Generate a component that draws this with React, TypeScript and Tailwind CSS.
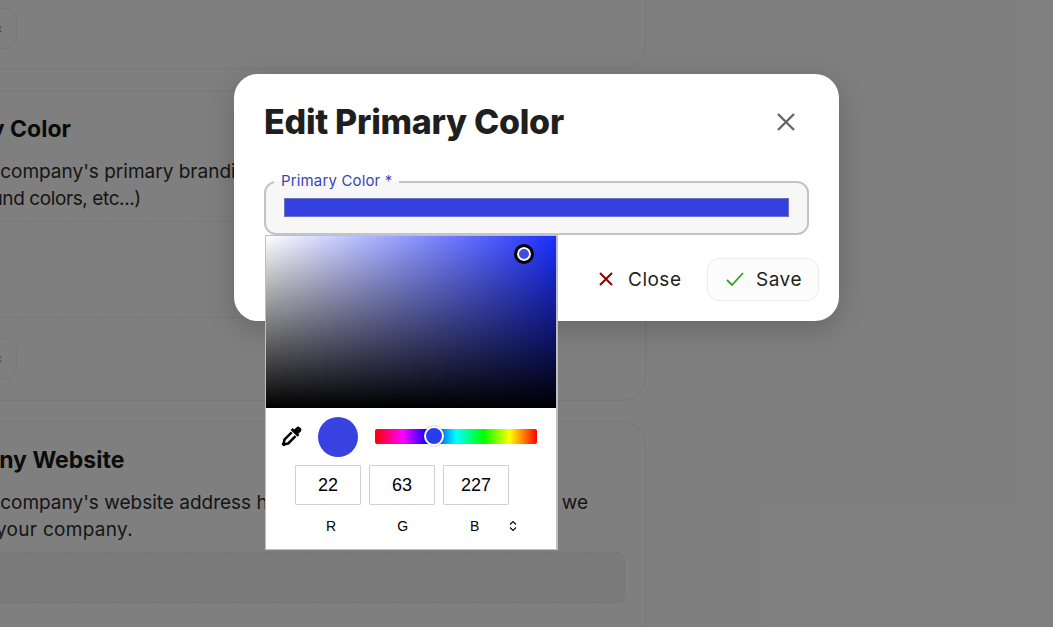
import React from "react";

const font = { fontFamily: "Inter, 'Liberation Sans', sans-serif" };

function SmallButton() {
  return (
    <div className="w-[48px] h-[41px] ml-[-31px] rounded-[12px] border border-[#eeeeee] flex items-center justify-end pr-[14px] text-[#888888] text-xs">
      ‹
    </div>
  );
}

function Background() {
  return (
    <div className="w-[646px] text-[#161616]" style={font}>
      <div className="h-[69px] ml-[-40px] rounded-br-[24px] border-r border-b border-[#eeeeee] pt-[8px] pl-[40px]">
        <SmallButton />
      </div>

      <div className="mt-[22px] h-[310px] ml-[-40px] rounded-[24px] border border-[#eeeeee] pl-[39px] pr-[20px]">
        <div className="pt-[22px] text-[23px] leading-[30px] font-bold whitespace-nowrap ml-[-84px]">Primary Color</div>
        <div className="mt-[14px] text-[19px] leading-[27px] text-[#2c2c2c] whitespace-nowrap">
          <div className="ml-[-87px]">Add your company's primary branding color here</div>
          <div className="ml-[-160px] tracking-[-0.4px]">(buttons, background colors, etc...)</div>
        </div>
        <div className="mt-[9px] h-[97px] ml-[-39px] rounded-[8px] border border-dashed border-[#e8e8e8]" />
        <div className="mt-[20px]">
          <SmallButton />
        </div>
      </div>

      <div className="mt-[20px] h-[260px] ml-[-40px] rounded-t-[24px] border border-b-0 border-[#eeeeee] pl-[39px] pr-[20px]">
        <div className="pt-[23px] text-[23px] leading-[30px] font-bold whitespace-nowrap ml-[-81px]">Company Website</div>
        <div className="mt-[14px] text-[19px] leading-[27px] text-[#2c2c2c] whitespace-nowrap">
          <div className="flex justify-between w-[675px] ml-[-87px]">
            <span>Add your company's website address here so that</span>
            <span>we</span>
          </div>
          <div className="ml-[-4px] tracking-[0.3px]">your company.</div>
        </div>
        <div className="mt-[9px] h-[51px] rounded-[8px] border border-dashed border-[#e8e8e8] bg-[#f5f5f5] ml-[-39px]" />
      </div>
    </div>
  );
}

function Eyedropper() {
  return (
    <svg width="22" height="22" viewBox="0 0 22 22" className="shrink-0 mb-[2px]">
      <path d="M13.2 4.6 15.6 2.2a2.2 2.2 0 0 1 3.1 0l1.1 1.1a2.2 2.2 0 0 1 0 3.1l-2.4 2.4 1 1-1.9 1.9-6.8-6.8 1.9-1.9z" fill="#000" />
      <path d="M10.7 7.4 3.4 14.7 2.9 17.4l-.9 1.6.9.9 1.6-.9 2.7-.5 7.3-7.3" fill="none" stroke="#000" strokeWidth="2.5" strokeLinejoin="round" />
    </svg>
  );
}

function Picker() {
  const arial = { fontFamily: "'Liberation Sans', Arial, sans-serif" };
  return (
    <div className="absolute left-[265px] top-[235px] w-[293px] h-[315px] bg-white border border-[#bfbfbf] border-r-2 text-black" style={arial}>
      <div className="relative h-[172px] bg-[linear-gradient(to_bottom,rgba(0,0,0,0),#000),linear-gradient(to_right,#fff,#1c2eff)]">
        <div className="absolute left-[248px] top-[8px] w-[20px] h-[20px] rounded-full border-[3px] border-black bg-[#3f4ce0] shadow-[inset_0_0_0_2px_#fff]" />
      </div>
      <div className="flex items-center h-[57px] pl-[15px] pt-[1px]">
        <Eyedropper />
        <div className="ml-[15px] w-[40px] h-[40px] rounded-full bg-[#3742e0]" />
        <div className="relative ml-[17px] mb-[2px] w-[162px] h-[15px] rounded-[2px] bg-[linear-gradient(to_right,#f00,#f0f_17%,#00f_33%,#0ff_50%,#0f0_67%,#ff0_83%,#f00)]">
          <div className="absolute left-[49px] top-[-2.5px] w-[20px] h-[20px] rounded-full border-[2px] border-white bg-[#2a3cf0] shadow-[0_0_2px_rgba(0,0,0,0.4)]" />
        </div>
      </div>
      <div className="flex gap-[8px] pl-[29px]">
        {["22", "63", "227"].map((v) => (
          <div key={v} className="w-[66px] h-[40px] border border-[#d0d0d0] rounded-[1px] flex items-center justify-center text-[18px]">
            {v}
          </div>
        ))}
      </div>
      <div className="flex items-center mt-[12px] h-[18px] text-[14px]">
        <span className="ml-[60px]">R</span>
        <span className="ml-[61px]">G</span>
        <span className="ml-[62px]">B</span>
        <svg width="10" height="12" viewBox="0 0 10 12" className="ml-[29px]" fill="none" stroke="#000" strokeWidth="1.1">
          <path d="M2 4.5 5 1.5l3 3M2 7.5l3 3 3-3" />
        </svg>
      </div>
    </div>
  );
}

function Modal() {
  return (
    <div className="absolute left-[234px] top-[74px] w-[605px] h-[247px] bg-white rounded-[24px] text-[#1f1f1f] shadow-[0_8px_30px_rgba(0,0,0,0.2)]" style={font}>
      <div className="flex items-center justify-between pl-[30px] pr-[41px] pt-[25px] h-[71px]">
        <h1 className="text-[34px] leading-[44px] font-extrabold tracking-[-0.27px] whitespace-nowrap">Edit Primary Color</h1>
        <svg width="24" height="24" viewBox="0 0 24 24" fill="none" stroke="#666666" strokeWidth="2.4">
          <path d="M4 4l16 16M20 4 4 20" />
        </svg>
      </div>

      <fieldset className="mt-[29px] mx-[30px] h-[61px] rounded-[12px] border-2 border-[#c4c4c4] bg-[#f7f7f7] px-[18px]">
        <legend className="ml-[-10px] px-[7px] text-[15px] leading-[16px] text-[#3a46b8] tracking-[0.15px] -translate-y-px">Primary Color *</legend>
        <div className="h-[19px] mt-[8px] bg-[#3540e0] border border-[#6a72c0]" />
      </fieldset>

      <div className="flex justify-end items-center mt-[23px] pr-[20px] gap-[9px] text-[19px] tracking-[0.5px]">
        <div className="flex items-center h-[43px] w-[112px] pl-[11px] gap-[13px]">
          <svg width="18" height="18" viewBox="0 0 18 18" fill="none" stroke="#8b0000" strokeWidth="2" className="mb-[2px]">
            <path d="M3 3l12 12M15 3 3 15" />
          </svg>
          <span className="mt-[2px]">Close</span>
        </div>
        <div className="flex items-center h-[43px] w-[112px] pl-[17px] gap-[11px] rounded-[12px] border border-[#ececec] bg-[#fcfcfc]">
          <svg width="20" height="18" viewBox="0 0 20 18" fill="none" stroke="#37a01e" strokeWidth="1.8" className="mb-[2px]">
            <path d="M2 10l5 5L18 3" />
          </svg>
          <span className="mt-[2px]">Save</span>
        </div>
      </div>
    </div>
  );
}

export default function App() {
  return (
    <div className="relative w-[1053px] h-[627px] overflow-hidden bg-white">
      <Background />
      <div className="absolute inset-0 bg-black/50" />
      <Modal />
      <Picker />
    </div>
  );
}
